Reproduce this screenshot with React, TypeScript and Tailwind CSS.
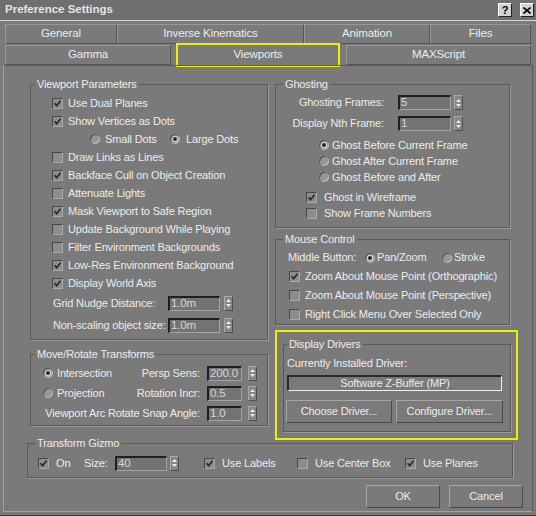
import React from 'react'

function Check({ on }: { on?: boolean }) {
  return (
    <span className="flex h-[11px] w-[11px] shrink-0 items-center justify-center border border-t-[#474747] border-l-[#474747] border-r-[#a9a9a9] border-b-[#a9a9a9] bg-[#8d8d8d]">
      {on && (
        <svg viewBox="0 0 9 9" className="h-[9px] w-[9px]">
          <path d="M1.5 4.2 L3.6 6.6 L7.6 1.8" fill="none" stroke="#2a2a2a" strokeWidth="1.7" />
        </svg>
      )}
    </span>
  )
}

function Radio({ on }: { on?: boolean }) {
  return (
    <span className="flex h-[10px] w-[10px] shrink-0 items-center justify-center rounded-full bg-[#969696] shadow-[inset_1px_1px_0_#555,inset_-1px_-1px_0_#b8b8b8]">
      {on && <span className="h-[4px] w-[4px] rounded-full bg-[#262626] shadow-[0_0_0_1px_#dedede]" />}
    </span>
  )
}

function Spin({ w = 'w-[9px]' }: { w?: string }) {
  return (
    <span
      className={`flex h-[15px] ${w} shrink-0 flex-col items-center justify-center gap-[2px] border border-t-[#a9a9a9] border-l-[#a9a9a9] border-r-[#4e4e4e] border-b-[#4e4e4e] bg-[#868686]`}
    >
      <svg width="5" height="3">
        <path d="M0 3 L2.5 0 L5 3Z" fill="#f0f0f0" />
      </svg>
      <svg width="5" height="3">
        <path d="M0 0 L2.5 3 L5 0Z" fill="#f0f0f0" />
      </svg>
    </span>
  )
}

function Field({ v, w }: { v: string; w: string }) {
  return (
    <span
      className={`flex h-[15px] ${w} shrink-0 items-center overflow-hidden border-t-2 border-l-2 border-r border-b border-t-[#1f1f1f] border-l-[#1f1f1f] border-r-[#a3a3a3] border-b-[#a3a3a3] bg-[#737373] pl-[1px] text-[11.5px] leading-none text-[#d6d6d6]`}
    >
      {v}
    </span>
  )
}

function Group({
  title,
  className,
  legend,
  children,
}: {
  title: string
  className: string
  legend: string
  children: React.ReactNode
}) {
  return (
    <fieldset className={`border border-[#5a5a5a] shadow-[1px_1px_0_#9a9a9a] ${className}`}>
      <legend className={`${legend} px-[2px] leading-[13px]`}>{title}</legend>
      {children}
    </fieldset>
  )
}

function Btn({ label, w }: { label: string; w: string }) {
  return (
    <button
      className={`flex h-[23px] ${w} items-center justify-center border border-t-[#a6a6a6] border-l-[#a6a6a6] border-r-[#4a4a4a] border-b-[#4a4a4a] bg-[#7a7a7a] text-[11px] text-[#ececec]`}
    >
      {label}
    </button>
  )
}

const VP_CHECKS: [string, boolean][] = [
  ['Use Dual Planes', true],
  ['Show Vertices as Dots', true],
]

const VP_CHECKS2: [string, boolean][] = [
  ['Draw Links as Lines', false],
  ['Backface Cull on Object Creation', true],
  ['Attenuate Lights', false],
  ['Mask Viewport to Safe Region', true],
  ['Update Background While Playing', false],
  ['Filter Environment Backgrounds', false],
  ['Low-Res Environment Background', true],
  ['Display World Axis', true],
]

export default function App() {
  return (
    <div className="flex h-[516px] w-[536px] flex-col whitespace-nowrap border-b border-[#333] bg-[#7a7a7a] font-['Liberation_Sans',Arial,sans-serif] text-[11px] tracking-[-0.15px] text-[#ececec]">
      {/* title bar */}
      <div className="flex h-[21px] shrink-0 items-center justify-between border-b border-[#d6d6d6] bg-[#6f6f6f] pl-[5px] pr-[2px]">
        <span className="text-[11.5px] font-bold tracking-normal text-[#e4e4e4]">Preference Settings</span>
        <div className="flex gap-[8px]">
          <span className="flex h-[14px] w-[14px] items-center justify-center border border-t-white border-l-white border-r-[#222] border-b-[#222] bg-[#d2d2d2] text-[11px] font-bold leading-none text-black">
            ?
          </span>
          <span className="flex h-[14px] w-[14px] items-center justify-center border border-t-white border-l-white border-r-[#222] border-b-[#222] bg-[#d2d2d2]">
            <svg width="8" height="7">
              <path d="M0.5 0.5 L7.5 6.5 M7.5 0.5 L0.5 6.5" stroke="#000" strokeWidth="1.6" />
            </svg>
          </span>
        </div>
      </div>

      {/* tabs */}
      <div className="mt-[3px] flex h-[20px] shrink-0 px-[5px]">
        {[
          ['General', 'w-[112px]'],
          ['Inverse Kinematics', 'w-[187px]'],
          ['Animation', 'w-[126px]'],
          ['Files', 'w-[101px]'],
        ].map(([t, w]) => (
          <div
            key={t}
            className={`flex ${w} items-center justify-center border border-t-[#999] border-l-[#999] border-r-[#555] border-b-[#555] text-[11.5px]`}
          >
            {t}
          </div>
        ))}
      </div>
      <div className="mt-[1px] flex h-[20px] shrink-0 px-[5px]">
        <div className="flex w-[166px] items-center justify-center border border-t-[#999] border-l-[#999] border-r-[#555] border-b-[#555] text-[11.5px]">
          Gamma
        </div>
        <div className="flex w-[175px] pl-[5px] pr-[6px]">
          <div className="-my-[2px] flex flex-1 items-center justify-center border-2 border-[#eeee00] text-[11.5px]">
            Viewports
          </div>
        </div>
        <div className="flex w-[185px] items-center justify-center border border-t-[#999] border-l-[#999] border-r-[#555] border-b-[#555] text-[11.5px]">
          MAXScript
        </div>
      </div>

      {/* page */}
      <div className="mx-[3px] mb-[3px] flex flex-1 flex-col border border-t-[#5c5c5c] border-l-[#a0a0a0] border-r-[#5c5c5c] border-b-[#a0a0a0] pt-[12px]">
        <div className="flex gap-[7px] pl-[26px]">
          {/* left column */}
          <div className="flex w-[238px] flex-col">
            <Group title="Viewport Parameters" className="pt-[3px] pb-[3px]" legend="ml-[4px]">
              {VP_CHECKS.map(([t, on]) => (
                <div key={t} className="flex h-[18px] items-center gap-[5px] pl-[21px]">
                  <Check on={on} />
                  <span>{t}</span>
                </div>
              ))}
              <div className="flex h-[18px] items-center pl-[59px]">
                <div className="flex w-[80px] items-center gap-[5px]">
                  <Radio />
                  <span>Small Dots</span>
                </div>
                <div className="flex items-center gap-[6px]">
                  <Radio on />
                  <span>Large Dots</span>
                </div>
              </div>
              {VP_CHECKS2.map(([t, on]) => (
                <div key={t} className="flex h-[18px] items-center gap-[5px] pl-[21px]">
                  <Check on={on} />
                  <span>{t}</span>
                </div>
              ))}
              <div className="flex h-[22px] items-center pl-[22px]">
                <span className="w-[115px]">Grid Nudge Distance:</span>
                <Field v="1.0m" w="w-[52px]" />
                <span className="ml-[4px]">
                  <Spin />
                </span>
              </div>
              <div className="flex h-[22px] items-center pl-[22px]">
                <span className="w-[115px]">Non-scaling object size:</span>
                <Field v="1.0m" w="w-[52px]" />
                <span className="ml-[4px]">
                  <Spin />
                </span>
              </div>
            </Group>

            <Group title="Move/Rotate Transforms" className="mt-[8px] pt-[2px] pb-[2px]" legend="ml-[4px]">
              {[
                ['Intersection', true, 'Persp Sens:', '200.0'],
                ['Projection', false, 'Rotation Incr:', '0.5'],
              ].map(([t, on, l, v]) => (
                <div key={t as string} className="flex h-[20px] items-center pl-[12px] pr-[10px]">
                  <Radio on={on as boolean} />
                  <span className="ml-[4px]">{t as string}</span>
                  <span className="ml-auto">{l as string}</span>
                  <span className="ml-[7px]">
                    <Field v={v as string} w="w-[35px]" />
                  </span>
                  <span className="ml-[6px]">
                    <Spin />
                  </span>
                </div>
              ))}
              <div className="flex h-[20px] items-center pl-[12px] pr-[10px]">
                <span className="ml-auto">Viewport Arc Rotate Snap Angle:</span>
                <span className="ml-[7px]">
                  <Field v="1.0" w="w-[35px]" />
                </span>
                <span className="ml-[6px]">
                  <Spin />
                </span>
              </div>
            </Group>
          </div>

          {/* right column */}
          <div className="flex w-[243px] flex-col">
            <Group title="Ghosting" className="w-[235px] pt-[1px] pb-[6px]" legend="ml-[7px]">
              {[
                ['Ghosting Frames:', '5'],
                ['Display Nth Frame:', '1'],
              ].map(([l, v]) => (
                <div key={l} className="flex h-[21px] items-center">
                  <span className="w-[108px] text-right">{l}</span>
                  <span className="ml-[14px]">
                    <Field v={v} w="w-[53px]" />
                  </span>
                  <span className="ml-[3px]">
                    <Spin />
                  </span>
                </div>
              ))}
              <div className="mt-[3px]">
                {[
                  ['Ghost Before Current Frame', true],
                  ['Ghost After Current Frame', false],
                  ['Ghost Before and After', false],
                ].map(([t, on]) => (
                  <div key={t as string} className="flex h-[16px] items-center gap-[3px] pl-[43px]">
                    <Radio on={on as boolean} />
                    <span>{t as string}</span>
                  </div>
                ))}
              </div>
              <div className="mt-[4px]">
                {[
                  ['Ghost in Wireframe', true],
                  ['Show Frame Numbers', false],
                ].map(([t, on]) => (
                  <div key={t as string} className="flex h-[16px] items-center gap-[7px] pl-[30px]">
                    <Check on={on as boolean} />
                    <span>{t as string}</span>
                  </div>
                ))}
              </div>
            </Group>

            <Group title="Mouse Control" className="mt-[5px] w-[235px] pt-[2px]" legend="ml-[7px]">
              <div className="flex h-[19px] items-center pl-[12px]">
                <span className="w-[77px]">Middle Button:</span>
                <div className="flex w-[77px] items-center gap-[2px]">
                  <Radio on />
                  <span>Pan/Zoom</span>
                </div>
                <div className="flex items-center gap-[2px]">
                  <Radio />
                  <span>Stroke</span>
                </div>
              </div>
              {[
                ['Zoom About Mouse Point (Orthographic)', true],
                ['Zoom About Mouse Point (Perspective)', false],
                ['Right Click Menu Over Selected Only', false],
              ].map(([t, on]) => (
                <div key={t as string} className="flex h-[19px] items-center gap-[5px] pl-[13px]">
                  <Check on={on as boolean} />
                  <span>{t as string}</span>
                </div>
              ))}
            </Group>

            <div className="mt-[5px] -mb-[3px] border-2 border-[#eeee00] pt-[6px] pr-[5px] pb-[6px] pl-[6px]">
              <Group title="Display Drivers" className="pt-[4px] pr-[6px] pb-[8px] pl-[3px]" legend="ml-0">
                <div className="flex h-[16px] items-center">Currently Installed Driver:</div>
                <div className="mt-[4px] flex h-[16px] w-[215px] items-center justify-center border-t-2 border-l-2 border-r border-b border-t-[#2a2a2a] border-l-[#2a2a2a] border-r-[#f0f0f0] border-b-[#f0f0f0]">
                  Software Z-Buffer (MP)
                </div>
                <div className="mt-[9px] -ml-[1px] flex gap-[4px]">
                  <Btn label="Choose Driver..." w="w-[106px] h-[22px]" />
                  <Btn label="Configure Driver..." w="w-[107px] h-[22px]" />
                </div>
              </Group>
            </div>
          </div>
        </div>

        {/* transform gizmo */}
        <Group title="Transform Gizmo" className="ml-[23px] w-[486px] pt-[4px] pb-[5px]" legend="ml-[7px]">
          <div className="flex h-[18px] items-center pl-[10px]">
            <div className="flex w-[46px] items-center gap-[7px]">
              <Check on />
              <span>On</span>
            </div>
            <span className="w-[31px]">Size:</span>
            <Field v="40" w="w-[52px]" />
            <span className="ml-[3px]">
              <Spin />
            </span>
            <div className="ml-[25px] flex w-[93px] items-center gap-[7px]">
              <Check on />
              <span>Use Labels</span>
            </div>
            <div className="flex w-[108px] items-center gap-[7px]">
              <Check />
              <span>Use Center Box</span>
            </div>
            <div className="flex items-center gap-[7px]">
              <Check on />
              <span>Use Planes</span>
            </div>
          </div>
        </Group>

        <div className="mt-[7px] flex justify-end gap-[9px] pr-[9px]">
          <Btn label="OK" w="w-[74px]" />
          <Btn label="Cancel" w="w-[74px]" />
        </div>
      </div>
    </div>
  )
}
